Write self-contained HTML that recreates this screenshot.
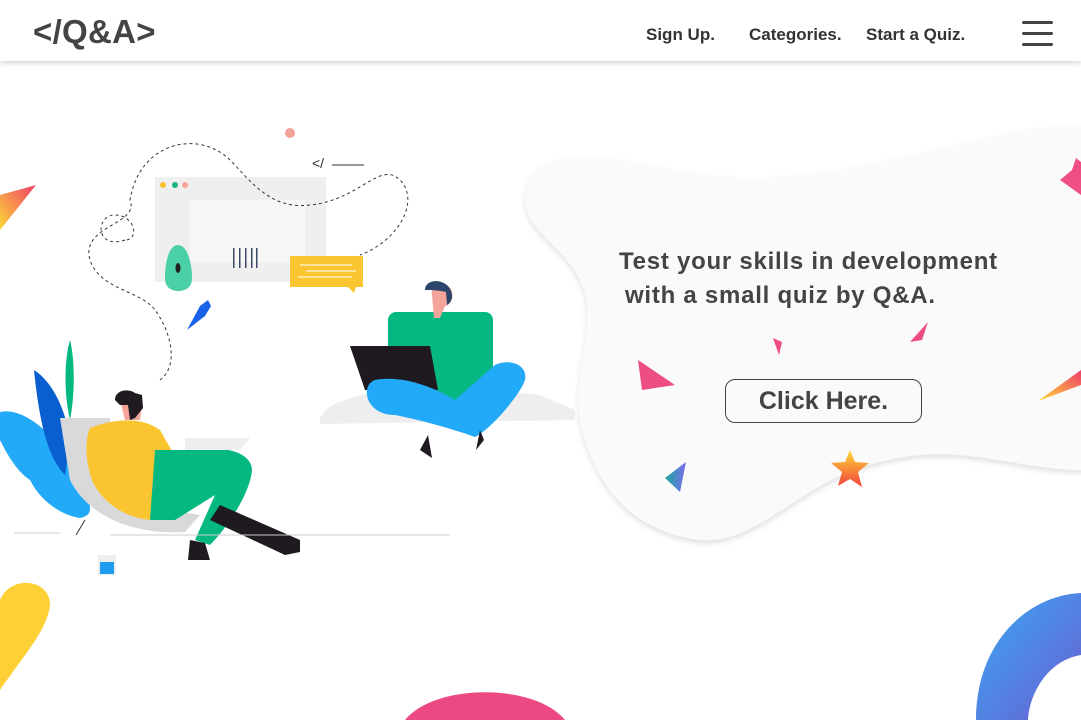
<!DOCTYPE html>
<html><head><meta charset="utf-8"><style>
html,body{margin:0;padding:0;width:1081px;height:720px;overflow:hidden;background:#fff;font-family:"Liberation Sans",sans-serif}
.nav{position:absolute;left:0;top:0;width:1081px;height:61px;background:#fff;box-shadow:0 3px 4px rgba(0,0,0,.13);z-index:5}
.logo{position:absolute;left:33px;top:13px;font-size:33px;font-weight:bold;color:#444;letter-spacing:0.3px}
.lk{position:absolute;top:25px;font-size:17px;font-weight:bold;color:#333}
.hb{position:absolute;left:1022px;width:31px;height:3px;background:#444;border-radius:2px}
svg{position:absolute;left:0;top:0}
.t{position:absolute;color:#444;font-weight:bold;font-size:24px;letter-spacing:.75px}
.btn{position:absolute;left:725px;top:379px;width:197px;height:44px;border:1.3px solid #444;border-radius:10px;box-sizing:border-box;text-align:center;line-height:43px;font-size:25px;font-weight:bold;color:#444}
</style></head><body>
<svg width="1081" height="720" viewBox="0 0 1081 720">
<defs>
<linearGradient id="g1" x1="0" y1="1" x2="1" y2="0"><stop offset="0" stop-color="#fdd835"/><stop offset="1" stop-color="#ef3f6b"/></linearGradient>
<linearGradient id="g2" x1="0" y1="0" x2="1" y2="1"><stop offset="0" stop-color="#39a8f5"/><stop offset="1" stop-color="#6a5fd0"/></linearGradient>
<linearGradient id="g3" x1="0" y1="0" x2="0" y2="1"><stop offset="0" stop-color="#fdd835"/><stop offset="1" stop-color="#f2433f"/></linearGradient>
<linearGradient id="g4" x1="0" y1="0" x2="1" y2="0"><stop offset="0" stop-color="#1aa89a"/><stop offset="1" stop-color="#7b6cf0"/></linearGradient>
<filter id="sh" x="-10%" y="-10%" width="120%" height="130%"><feDropShadow dx="0" dy="3" stdDeviation="3" flood-color="#000" flood-opacity=".12"/></filter>
</defs>
<path filter="url(#sh)" fill="#fafafa" d="M560,160 C620,150 680,180 760,178 C860,176 960,140 1040,128 L1090,126 L1090,470 C1020,472 960,440 880,462 C800,480 760,545 700,540 C620,530 590,470 580,420 C572,370 600,320 580,280 C560,240 520,230 526,190 C530,172 545,163 560,160 Z"/>
<polygon points="1060,180 1072,170 1076,158 1081,162 1081,195 1074,190" fill="#ee4d85"/>
<polygon points="638,360 675,385 642,390" fill="#ec4d84"/>
<polygon points="773,338 782,342 779,355" fill="#ec4d84"/>
<polygon points="928,322 922,340 910,342" fill="#ec4d84"/>
<polygon points="1038,401 1081,370 1081,385" fill="url(#g1)"/>
<polygon points="665,478 686,462 680,492" fill="url(#g4)"/>
<polygon points="850,450 855,462 869,463 858,472 862,487 850,479 838,486 842,472 831,463 845,462" fill="url(#g3)"/>
<polygon points="0,195 36,185 0,230" fill="url(#g1)"/>
<path d="M0,600 C10,575 50,578 50,605 C48,630 20,660 0,690 Z" fill="#fdd035"/>
<path d="M405,720 C435,683 535,683 565,720 Z" fill="#ec4883"/>
<path d="M976,720 C976,640 1030,595 1081,593 L1081,655 C1050,660 1030,690 1028,720 Z" fill="url(#g2)"/>
<circle cx="290" cy="133" r="5" fill="#f4a29a"/>
<text x="312" y="168" font-size="14" fill="#333" font-family="Liberation Sans">&lt;/</text>
<line x1="332" y1="165" x2="364" y2="165" stroke="#333" stroke-width="1"/>
<rect x="155" y="177" width="171" height="105" fill="#efefef"/>
<rect x="190" y="200" width="115" height="62" fill="#f7f7f7"/>
<circle cx="163" cy="185" r="3" fill="#fbc02d"/><circle cx="175" cy="185" r="3" fill="#1ab27d"/><circle cx="185" cy="185" r="3" fill="#f4a29a"/>
<g fill="#3c4a6a"><rect x="233" y="248" width="1.5" height="20"/><rect x="239" y="248" width="1.5" height="20"/><rect x="245" y="248" width="1.5" height="20"/><rect x="251" y="248" width="1.5" height="20"/><rect x="256" y="248" width="1.5" height="20"/></g>
<path d="M178,245 C168,245 165,265 165,278 C165,288 172,291 178,291 C185,291 192,288 192,278 C192,265 188,245 178,245 Z" fill="#4bcfa6"/>
<ellipse cx="178" cy="268" rx="2.5" ry="5" fill="#1f1f1f"/>
<rect x="290" y="256" width="73" height="31" fill="#fbc531"/><polygon points="348,287 356,287 354,293" fill="#fbc531"/>
<line x1="300" y1="265" x2="352" y2="265" stroke="#fff" stroke-width="1"/><line x1="306" y1="271" x2="356" y2="271" stroke="#fff" stroke-width="1"/><line x1="298" y1="277" x2="352" y2="277" stroke="#fff" stroke-width="1"/>
<path d="M160,380 C180,365 170,330 155,310 C140,290 100,290 90,260 C80,225 140,225 130,200 C140,140 200,130 230,160 C250,180 270,210 310,205 C360,200 380,160 400,180 C420,200 400,240 360,255" fill="none" stroke="#333" stroke-width="1" stroke-dasharray="3,3"/>
<path d="M125,240 C95,250 95,215 115,215 C135,215 140,240 125,240" fill="none" stroke="#333" stroke-width="1" stroke-dasharray="3,3"/>
<polygon points="187,330 200,306 208,300 211,306 205,316" fill="#1a63e8"/>
<path d="M320,418 C330,400 350,400 360,395 C380,390 500,390 540,395 L575,410 L575,420 L320,424 Z" fill="#eee"/>
<rect x="388" y="312" width="105" height="95" rx="8" fill="#05b882"/>
<path d="M350,346 L430,346 L438,390 L365,390 Z" fill="#1f1a1f"/>
<path d="M375,380 C360,385 365,415 395,415 C420,420 450,428 475,437 C490,430 520,395 525,380 C528,365 510,358 495,365 L455,400 C430,385 400,375 375,380 Z" fill="#22a9f7"/>
<path d="M432,295 C430,288 440,282 447,286 C455,288 454,305 445,306 L440,318 L434,318 Z" fill="#f4a49b"/>
<path d="M425,290 C425,280 440,278 448,286 C455,295 452,302 447,305 L446,292 C438,290 430,290 425,290 Z" fill="#2c466d"/>
<path d="M428,435 L420,450 L432,458 Z M480,430 L476,450 L484,440 Z" fill="#1f1a1f"/>
<path d="M0,412 C20,408 40,425 55,440 C65,450 80,470 85,490 C90,505 95,515 80,518 C60,515 40,500 30,480 C15,470 5,450 0,440 Z" fill="#22a9f7"/>
<path d="M34,370 C50,380 65,405 70,440 L65,475 C50,460 40,430 34,370 Z" fill="#0a5fd0"/>
<path d="M70,340 C75,360 75,395 70,420 C64,395 64,360 70,340 Z" fill="#05b882"/>
<path d="M60,418 L110,418 C110,460 140,500 170,510 L200,515 L185,532 C140,535 90,520 70,480 Z" fill="#d9d9d9"/>
<path d="M90,428 C110,420 140,415 160,430 L180,465 C185,480 170,500 155,520 C125,520 100,500 92,480 C85,460 85,440 90,428 Z" fill="#fbc531"/>
<path d="M155,450 L200,450 C230,445 252,455 252,470 C250,495 225,530 210,545 L195,540 L215,495 L175,520 L150,520 Z" fill="#05b882"/>
<path d="M220,505 L300,540 L300,552 L285,555 L210,520 Z" fill="#1f1a1f"/>
<path d="M190,540 L205,543 L210,560 L188,560 Z" fill="#1f1a1f"/>
<path d="M120,400 C115,390 130,388 135,395 L142,405 L140,420 L125,420 Z" fill="#f4a49b"/>
<path d="M115,400 C115,390 128,388 135,393 L142,395 L143,408 L135,418 L130,420 L128,405 L120,405 Z" fill="#1f1a1f"/>
<path d="M185,438 L250,438 L240,450 L185,450 Z" fill="#eee"/>
<line x1="14" y1="533" x2="60" y2="533" stroke="#ccc" stroke-width="1"/>
<line x1="110" y1="535" x2="450" y2="535" stroke="#ccc" stroke-width="1"/>
<rect x="98" y="555" width="18" height="20" fill="#eee"/><rect x="100" y="562" width="14" height="12" fill="#1e9cf0"/>
<line x1="76" y1="535" x2="85" y2="520" stroke="#333" stroke-width="1"/>
</svg>
<div class="nav">
<div class="logo">&lt;/Q&amp;A&gt;</div>
<div class="lk" style="left:646px">Sign Up.</div>
<div class="lk" style="left:749px">Categories.</div>
<div class="lk" style="left:866px">Start a Quiz.</div>
<div class="hb" style="top:21px"></div><div class="hb" style="top:32px"></div><div class="hb" style="top:43px"></div>
</div>
<div class="t" style="left:619px;top:248px">Test your skills in development</div>
<div class="t" style="left:625px;top:282px">with a small quiz by Q&amp;A.</div>
<div class="btn">Click Here.</div>
</body></html>
